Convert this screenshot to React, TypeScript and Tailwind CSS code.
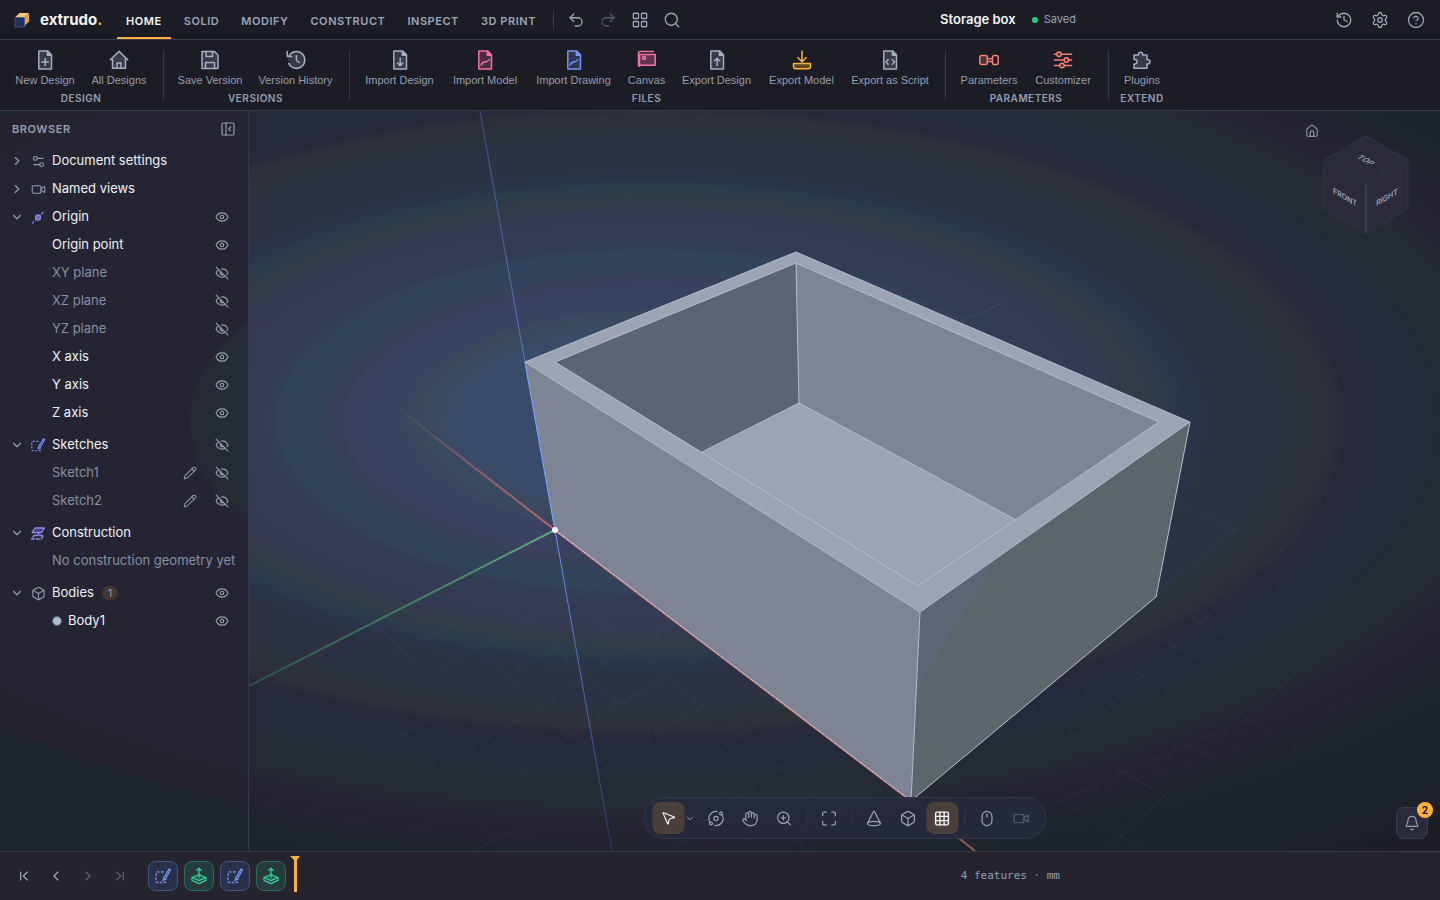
import React from "react";
import {
  Bell,
  Box,
  ChevronDown,
  ChevronFirst,
  ChevronLast,
  ChevronLeft,
  ChevronRight,
  CircleQuestionMark,
  Cone,
  Eye,
  EyeOff,
  Grid3x3,
  Hand,
  History,
  House,
  LayoutGrid,
  Maximize,
  Mouse,
  MousePointer2,
  Orbit,
  PanelLeftClose,
  Pencil,
  Redo2,
  Search,
  Settings,
  Settings2,
  Undo2,
  Video,
  ZoomIn,
} from "lucide-react";

type IconProps = { className?: string };

// Duotone 20px icons: stroke in the current colour, fill in a faded version of it
const Duotone: React.FC<{ className?: string; children: React.ReactNode }> = ({ className = "", children }) => (
  <svg
    viewBox="0 0 20 20"
    className={`size-5 ${className}`}
    fill="none"
    stroke="currentColor"
    strokeWidth="1.5"
    strokeLinejoin="round"
    aria-hidden="true"
  >
    {children}
  </svg>
);

const FilePage: React.FC<IconProps & { children: React.ReactNode }> = ({ className, children }) => (
  <Duotone className={className}>
    <path d="M3.8 1h9l3.7 3.8V19H3.8z" fill="currentColor" fillOpacity="0.22" />
    <path d="M12.4 1v4.2h4.1" fill="currentColor" />
    {children}
  </Duotone>
);

const NewDesignIcon = () => (
  <FilePage className="text-[#a3afc2]">
    <path d="M10.2 8v8M6.3 12h7.8" />
  </FilePage>
);
const AllDesignsIcon = () => (
  <Duotone className="text-[#a3afc2]">
    <path d="M3.5 9v9.2h13V9L10 2.2z" fill="currentColor" fillOpacity="0.22" stroke="none" />
    <path d="M.8 10.2 10 1.4l9.2 8.8M3.5 8.5v9.8h13V8.5M8 18v-5h4v5" />
  </Duotone>
);
const SaveIcon = () => (
  <Duotone className="text-[#a3afc2]">
    <path d="M2 1.5h12.5L18 5v13.5H2z" fill="currentColor" fillOpacity="0.22" />
    <path d="M6 1.5v5h6.5v-5M5.5 18.5v-6h9v6" />
  </Duotone>
);
const VersionHistoryIcon = () => (
  <Duotone className="text-[#a3afc2]">
    <circle cx="10.5" cy="10" r="8.4" fill="currentColor" fillOpacity="0.2" stroke="none" />
    <path d="M2.6 13A8.4 8.4 0 1 0 3 6M1.3 1v5.6h5M10.4 5v5.5l3.4 2.3" />
  </Duotone>
);
const ImportDesignIcon = () => (
  <FilePage className="text-[#a3afc2]">
    <path d="M10.2 7.5v8M7.2 12.6l3 3 3-3" />
  </FilePage>
);
const ImportModelIcon = () => (
  <FilePage className="text-[#f472a4]">
    <path d="M6 15.5c1-4 2.5-3 4.2-3.5S13 11 14.5 9.500" />
  </FilePage>
);
const ImportDrawingIcon = () => (
  <FilePage className="text-[#7396f5]">
    <path d="M6 15.5c1-4 2.5-3 4.2-3.5S13 11 14.5 9.500" />
  </FilePage>
);
const CanvasIcon = () => (
  <Duotone className="text-[#f472a4]">
    <path d="M2.5 4.5h15.7v10.700H2.5z" fill="currentColor" fillOpacity="0.3" />
    <path d="M1.5 16.5V3.5c0-1.5.7-2 2-2H17M2.5 15v2" />
    <circle cx="7" cy="8" r="1.5" />
  </Duotone>
);
const ExportDesignIcon = () => (
  <FilePage className="text-[#a3afc2]">
    <path d="M10.2 16V8.5M7.2 11.3l3-3 3 3" />
  </FilePage>
);
const ExportModelIcon = () => (
  <Duotone className="text-[#fbb432]">
    <path d="M1.5 13.5h17v3q0 2.3-2.3 2.3H3.8q-2.3 0-2.3-2.3z" fill="currentColor" fillOpacity="0.3" />
    <path d="M10 .5v11M5.5 7.3l4.5 4.5 4.5-4.5" />
  </Duotone>
);
const ExportScriptIcon = () => (
  <FilePage className="text-[#a3afc2]">
    <path d="M8.5 9.3 6 12l2.5 2.7M12 9.3l2.5 2.7-2.5 2.7" />
  </FilePage>
);
const ParametersIcon = () => (
  <Duotone className="text-[#f4806f]">
    <rect x=".8" y="5.5" width="7.5" height="9" rx="1.5" fill="currentColor" fillOpacity="0.22" />
    <rect x="13.5" y="5.5" width="5.7" height="9" rx="1.8" />
    <path d="M8.3 8.8h5.2M8.3 11.4h5.2" />
  </Duotone>
);
const CustomizerIcon = () => (
  <Duotone className="text-[#f4806f]">
    <path d="M.8 4.3h2.8M8.4 4.3h10.8M.8 10h10M16 10h3.2M.8 15.5h5.8M11.5 15.5h7.7" />
    <circle cx="6" cy="4.3" r="2.3" fill="currentColor" fillOpacity="0.22" />
    <circle cx="13.4" cy="10" r="2.3" fill="currentColor" fillOpacity="0.22" />
    <circle cx="9" cy="15.5" r="2.3" fill="currentColor" fillOpacity="0.22" />
  </Duotone>
);
const PluginsIcon = () => (
  <Duotone className="text-[#a3afc2]">
    <path
      d="M2 5h4.5V4.3a2.1 2.1 0 0 1 4.2 0V5H15v4.5h.7a2.3 2.3 0 0 1 0 4.6H15v4.2H2v-4.2h.8a2.3 2.3 0 0 0 0-4.6H2z"
      fill="currentColor"
      fillOpacity="0.2"
    />
  </Duotone>
);

const SketchIcon: React.FC<IconProps> = ({ className = "" }) => (
  <svg viewBox="0 0 18 18" className={className} fill="none" stroke="currentColor" strokeWidth="1.3" aria-hidden="true">
    <path d="M9.5 5h-6Q2 5 2 6.500v7.5q0 1.500 1.500 1.500h7q1.500 0 1.500-1.500v-2" strokeDasharray="2.500 1.500" />
    <path d="m15 2 1.500 1-5.200 9-2 1.500.2-2.500z" fill="currentColor" fillOpacity="0.3" strokeLinejoin="round" />
  </svg>
);

const ExtrudeIcon: React.FC<IconProps> = ({ className = "" }) => (
  <svg
    viewBox="0 0 18 18"
    className={className}
    fill="none"
    stroke="currentColor"
    strokeWidth="1.3"
    strokeLinejoin="round"
    aria-hidden="true"
  >
    <path d="M2 10.5 9 7.500l7 3-7 3.200z" fill="currentColor" fillOpacity="0.25" />
    <path d="M2 10.5v2.800l7 3.300 7-3.300v-2.800M9 10.500V1.500M6.500 3.800 9 1.300l2.500 2.500" />
  </svg>
);

const OriginIcon = () => (
  <svg viewBox="0 0 16 16" className="size-4" fill="none" stroke="#8b83f0" strokeWidth="1.3" aria-hidden="true">
    <path d="M2 14.500 14 2.500" strokeDasharray="3 1.400" />
    <circle cx="8" cy="8.500" r="2.500" fill="#5f6cc8" />
  </svg>
);

const ConstructionIcon = () => (
  <svg viewBox="0 0 16 16" className="size-4" fill="none" stroke="#8f85f5" strokeWidth="1.3" strokeLinejoin="round" aria-hidden="true">
    <path d="M5 3h9.500l-3 4.500H2z" fill="#8f85f5" fillOpacity="0.3" />
    <path d="M8.500 7.500v3M4 10.500h9.500L11 14H1.500z" strokeDasharray="4 1" />
  </svg>
);

type RibbonItem = { label: string; icon: React.FC; width: string };

const ribbonGroups: { name: string; items: RibbonItem[] }[] = [
  {
    name: "Design",
    items: [
      { label: "New Design", icon: NewDesignIcon, width: "w-[74px]" },
      { label: "All Designs", icon: AllDesignsIcon, width: "w-[70px]" },
    ],
  },
  {
    name: "Versions",
    items: [
      { label: "Save Version", icon: SaveIcon, width: "w-[78px]" },
      { label: "Version History", icon: VersionHistoryIcon, width: "w-[89px]" },
    ],
  },
  {
    name: "Files",
    items: [
      { label: "Import Design", icon: ImportDesignIcon, width: "w-[85px]" },
      { label: "Import Model", icon: ImportModelIcon, width: "w-[82px]" },
      { label: "Import Drawing", icon: ImportDrawingIcon, width: "w-[91px]" },
      { label: "Canvas", icon: CanvasIcon, width: "w-[51px]" },
      { label: "Export Design", icon: ExportDesignIcon, width: "w-[85px]" },
      { label: "Export Model", icon: ExportModelIcon, width: "w-[81px]" },
      { label: "Export as Script", icon: ExportScriptIcon, width: "w-[92px]" },
    ],
  },
  {
    name: "Parameters",
    items: [
      { label: "Parameters", icon: ParametersIcon, width: "w-[72px]" },
      { label: "Customizer", icon: CustomizerIcon, width: "w-[72px]" },
    ],
  },
  { name: "Extend", items: [{ label: "Plugins", icon: PluginsIcon, width: "w-[52px]" }] },
];

const tabs = ["Home", "Solid", "Modify", "Construct", "Inspect", "3D Print"];

const Logo = () => (
  <svg viewBox="0 0 16 16" className="size-4" aria-hidden="true">
    <path d="M1 5.500 5.500 1H15l-4.500 4.500z" fill="#fcc873" />
    <path d="M10.500 5.500 15 1v8.500L10.500 14z" fill="#e9a23c" />
    <path d="M1 5.500h9.500V15H1z" fill="#1f3158" stroke="#4a6cb0" strokeDasharray="1.500 1" />
  </svg>
);

const IconButton: React.FC<{ label: string; className?: string; disabled?: boolean; children: React.ReactNode }> = ({
  label,
  className = "size-8",
  disabled,
  children,
}) => (
  <button
    type="button"
    aria-label={label}
    disabled={disabled}
    className={`flex shrink-0 items-center justify-center rounded-lg disabled:opacity-45 ${className}`}
  >
    {children}
  </button>
);

const TopBar = () => (
  <header className="flex h-10 shrink-0 items-center border-b border-[#353b4c] bg-[#1c1c24] text-[#9aa5b8]">
    <a href="#" className="flex items-center pl-[14px]">
      <Logo />
      <span className="ml-[10px] w-[60px] pt-px text-[15px] font-bold text-[#f1f4f9]">
        extrudo<span className="text-[#ffb02e]">.</span>
      </span>
    </a>
    <nav className="ml-[17px] flex h-full items-stretch gap-1">
      {tabs.map((tab, i) => (
        <button
          key={tab}
          type="button"
          className={`border-b-2 px-[9px] pt-[6px] text-[11px] font-semibold tracking-wider whitespace-nowrap uppercase ${
            i === 0 ? "border-[#ffb13c] text-[#f1f4f9]" : "border-transparent"
          }`}
        >
          {tab}
        </button>
      ))}
    </nav>
    <div className="ml-2 flex items-center border-l border-[#353b4c] pl-[6px]">
      <IconButton label="Undo" className="h-5 w-8">
        <Undo2 size={18} strokeWidth={1.75} />
      </IconButton>
      <IconButton label="Redo" className="h-5 w-8" disabled>
        <Redo2 size={18} strokeWidth={1.75} />
      </IconButton>
      <IconButton label="All commands" className="h-5 w-8">
        <LayoutGrid size={18} strokeWidth={1.75} />
      </IconButton>
      <IconButton label="Search" className="h-5 w-8">
        <Search size={18} strokeWidth={1.75} />
      </IconButton>
    </div>
    <div className="flex flex-1 items-center justify-center">
      <h1 className="text-[13px] font-semibold text-[#f1f4f9]">Storage box</h1>
      <span className="ml-4 size-[6px] rounded-full bg-[#2fc48d]" />
      <span className="ml-[6px] text-[11px]">Saved</span>
    </div>
    <div className="flex items-center gap-1 pr-2">
      <IconButton label="History">
        <History size={18} strokeWidth={1.75} />
      </IconButton>
      <IconButton label="Settings">
        <Settings size={18} strokeWidth={1.75} />
      </IconButton>
      <IconButton label="Help">
        <CircleQuestionMark size={18} strokeWidth={1.75} />
      </IconButton>
    </div>
  </header>
);

const Ribbon = () => (
  <div className="flex h-[71px] shrink-0 border-b border-[#333c4b] bg-[#1c1c24] pt-[10px] pl-px text-[#939eb1]">
    {ribbonGroups.map((group) => (
      <section key={group.name} className="flex h-[50px] flex-col items-center border-r border-[#333a4a] pr-[9px] pl-[7px] last:border-0">
        <div className="flex gap-[2px]">
          {group.items.map((item) => (
            <button key={item.label} type="button" className={`flex flex-col items-center ${item.width}`}>
              <item.icon />
              <span className="mt-[2px] font-['Liberation_Sans',sans-serif] text-[11px] leading-4 whitespace-nowrap">{item.label}</span>
            </button>
          ))}
        </div>
        <h2 className="mt-[3px] text-[10px] leading-[14px] font-semibold tracking-wider uppercase">{group.name}</h2>
      </section>
    ))}
  </div>
);

type TreeNode = {
  label: string;
  icon?: React.ReactNode;
  open?: boolean;
  root?: boolean;
  visible?: boolean;
  muted?: boolean;
  editable?: boolean;
  count?: number;
  dot?: boolean;
};

const tree: TreeNode[][] = [
  [
    { label: "Document settings", root: true, icon: <Settings2 size={15} strokeWidth={1.75} /> },
    { label: "Named views", root: true, icon: <Video size={15} strokeWidth={1.75} /> },
    { label: "Origin", root: true, open: true, visible: true, icon: <OriginIcon /> },
    { label: "Origin point", visible: true },
    { label: "XY plane", visible: false, muted: true },
    { label: "XZ plane", visible: false, muted: true },
    { label: "YZ plane", visible: false, muted: true },
    { label: "X axis", visible: true },
    { label: "Y axis", visible: true },
    { label: "Z axis", visible: true },
  ],
  [
    { label: "Sketches", root: true, open: true, visible: false, icon: <SketchIcon className="size-4 text-[#6f92f0]" /> },
    { label: "Sketch1", visible: false, muted: true, editable: true },
    { label: "Sketch2", visible: false, muted: true, editable: true },
  ],
  [
    { label: "Construction", root: true, open: true, icon: <ConstructionIcon /> },
    { label: "No construction geometry yet", muted: true },
  ],
  [
    { label: "Bodies", root: true, open: true, visible: true, count: 1, icon: <Box size={15} strokeWidth={1.75} /> },
    { label: "Body1", visible: true, dot: true },
  ],
];

const TreeRow: React.FC<{ node: TreeNode }> = ({ node }) => (
  <li className="flex h-7 items-center pr-[19px] pl-[10px] text-[#929daf]">
    <span className="flex w-[42px] shrink-0 items-center">
      {node.root && (
        <button type="button" aria-label={`Toggle ${node.label}`} aria-expanded={!!node.open} className="flex w-[14px] justify-center">
          {node.open ? <ChevronDown size={14} strokeWidth={2} /> : <ChevronRight size={14} strokeWidth={2} />}
        </button>
      )}
      {node.icon && <span className="ml-[6px] flex w-4 justify-center">{node.icon}</span>}
    </span>
    {node.dot && <span className="mr-[6px] size-[10px] shrink-0 rounded-full border border-[#566072] bg-[#b0bccd]" />}
    <span className={`text-[13px] whitespace-nowrap ${node.muted ? "text-[#8590a2]" : "text-[#eef1f6]"}`}>{node.label}</span>
    {node.count !== undefined && (
      <span className="ml-2 rounded-full bg-[#45392f] px-[6px] text-[11px] leading-[14px]">{node.count}</span>
    )}
    <span className="ml-auto flex items-center gap-[18px]">
      {node.editable && (
        <button type="button" aria-label={`Edit ${node.label}`}>
          <Pencil size={14} strokeWidth={1.75} />
        </button>
      )}
      {node.visible !== undefined && (
        <button type="button" aria-label={`${node.visible ? "Hide" : "Show"} ${node.label}`}>
          {node.visible ? <Eye size={14} strokeWidth={2} /> : <EyeOff size={14} strokeWidth={2} />}
        </button>
      )}
    </span>
  </li>
);

const BrowserPanel = () => (
  <aside className="w-[249px] shrink-0 border-r border-[#303a49] bg-[radial-gradient(ellipse_1326px_600px_at_650px_311px,#252b33_34.6%,#252433_34.8%,#252433_65.6%,#24242c_65.8%,#26232d_68%,#26222d_70.2%,#1d242b_70.5%)]">
    <div className="flex h-9 items-center justify-between pr-3 pl-3 text-[#929daf]">
      <h2 className="text-[11px] font-semibold tracking-wider uppercase">Browser</h2>
      <button type="button" aria-label="Collapse browser">
        <PanelLeftClose size={16} strokeWidth={1.75} />
      </button>
    </div>
    <div className="flex flex-col gap-1">
      {tree.map((branch) => (
        <ul key={branch[0].label}>
          {branch.map((node) => (
            <TreeRow key={node.label} node={node} />
          ))}
        </ul>
      ))}
    </div>
  </aside>
);

// [offset, colour] bands of the backdrop glow, from the centre outwards
const glow: [number, string][] = [
  [0, "#41466a"],
  [4, "#3b4a6b"],
  [15, "#3a4b6a"],
  [16, "#3a4a60"],
  [18, "#3a485e"],
  [19, "#3b4161"],
  [22, "#3b4161"],
  [24, "#3a405a"],
  [25, "#33435b"],
  [28, "#31445b"],
  [29.5, "#343b54"],
  [34.5, "#343a54"],
  [36, "#343a48"],
  [37.5, "#323b48"],
  [39, "#2b3b4a"],
  [40.5, "#2a3449"],
  [42.5, "#2c3242"],
  [47, "#2c3242"],
  [48.5, "#2c333a"],
  [51, "#2c3238"],
  [52.5, "#272939"],
  [54, "#242a3a"],
  [58, "#242a3a"],
  [60, "#242b33"],
  [64.5, "#242b32"],
  [67, "#252432"],
  [70, "#242331"],
  [73, "#1d242b"],
  [85, "#1d232b"],
  [91, "#1c1c24"],
];

const floorGrid = [
  "M435 487 480 525M368 548 390 567M471 575 528 623M379 627 414 662M479 648 521 688M381 710 440 770M486 733 540 787",
  "M555 647 618 702M567 593 704 707M570 735 643 800M655 735 724 795M739 735 815 797",
  "M402 572 494 530M477 607 582 553M391 653 456 623M442 667 525 623M532 618 613 577M496 682 559 647M563 690 674 623",
  "M385 745 433 718M445 763 555 700M508 782 571 735 640 690M557 800 655 735 705 705M640 820 739 735 782 704M740 797 825 735",
  "M620 705 710 650M474 851 510 832M485 830 504 851M667 852 683 840 695 851M779 851 795 840 810 851",
  "M1177 503 1238 531M1184 474 1204 484M1280 550 1341 581M1257 576 1292 593M1230 597 1276 619M1188 616 1230 638",
  "M1150 633 1207 664M1108 654 1177 697M1066 678 1131 718M1028 706 1085 739M993 737 1047 768",
  "M1156 596 1234 529M1043 766 1112 704 1173 647 1303 531M1068 797 1246 720 1330 640",
  "M1246 718 1300 750M1180 740 1240 775M1120 770 1180 805M1060 800 1140 848M1110 848 1170 790",
];

const edge = "#b4bed1";

const Scene = () => (
  <svg viewBox="249 111 1191 740" preserveAspectRatio="xMidYMid slice" className="size-full" role="img" aria-label="Storage box model">
    <defs>
      <radialGradient id="glow" gradientUnits="userSpaceOnUse" cx="0" cy="0" r="600" gradientTransform="translate(650 421) scale(2.21 1)">
        {glow.map(([offset, color]) => (
          <stop key={offset} offset={`${offset}%`} stopColor={color} />
        ))}
      </radialGradient>
      <linearGradient id="axis-x" gradientUnits="userSpaceOnUse" x1="395" y1="406" x2="555" y2="530">
        <stop offset="0" stopColor="#e07a7a" stopOpacity="0" />
        <stop offset="1" stopColor="#b8646c" />
      </linearGradient>
      <linearGradient id="axis-y" gradientUnits="userSpaceOnUse" x1="249" y1="686" x2="555" y2="530">
        <stop offset="0" stopColor="#2c4f48" />
        <stop offset="1" stopColor="#5fa67c" />
      </linearGradient>
      <linearGradient id="axis-z" gradientUnits="userSpaceOnUse" x1="480" y1="111" x2="612" y2="851">
        <stop offset="0" stopColor="#3c5389" />
        <stop offset="0.57" stopColor="#6d97f7" />
        <stop offset="1" stopColor="#2b3a66" />
      </linearGradient>
      <linearGradient id="side" gradientUnits="userSpaceOnUse" x1="920" y1="612" x2="981" y2="649">
        <stop offset="0.48" stopColor="#5f6475" />
        <stop offset="0.52" stopColor="#5d656b" />
      </linearGradient>
    </defs>
    <rect x="249" y="111" width="1191" height="741" fill="url(#glow)" />
    <g fill="none" stroke="#5b6b6b" strokeOpacity="0.17">
      {floorGrid.map((d) => (
        <path key={d} d={d} />
      ))}
    </g>
    <path d="m960 322 42-19" stroke="#3f5a68" strokeOpacity="0.6" />
    <path d="M395 406 555 530" stroke="url(#axis-x)" strokeWidth="2" />
    <path d="M249 686 555 530" stroke="url(#axis-y)" strokeWidth="2" />
    <path d="m911 800 64 51" stroke="#9c5553" strokeWidth="2" />
    <path d="M480 111 555 530 612 851" stroke="url(#axis-z)" fill="none" />

    <g strokeLinejoin="round">
      <path d="M525 362 920 612 911 801 555 530z" fill="#7e8493" />
      <path d="M920 612 1190 422 1156 597 911 801z" fill="url(#side)" />
      <path d="M525 362 796 252 1190 422 920 612z" fill="#9da3b3" />
      <path d="M555 362 796 263 799 403 702 452z" fill="#5e6373" />
      <path d="M796 263 1159 422 1016 520 799 403z" fill="#7e8493" />
      <g fill="none" stroke={edge}>
        <path d="M525 362 796 252 1190 422 920 612z" />
        <path d="M555 362 796 263 1159 422 918 586z" />
        <path d="M796 263 799 403 702 452M799 403 1016 520" />
        <path d="M920 612 911 801 1156 597 1190 422" />
      </g>
      <path d="M525 362 555 530" stroke="#7ea2ff" />
      <path d="M555 530 911 801" stroke="#d8dbe6" />
      <path d="M555 531 910 801" stroke="#d9686b" />
    </g>
    <circle cx="555" cy="530" r="3" fill="#f4f6fa" />
  </svg>
);

const ViewCube = () => (
  <svg viewBox="0 0 88 100" className="h-[100px] w-[88px]" aria-label="View cube" role="img">
    <g fill="#2b2a39" stroke="#2c3843" strokeLinejoin="round">
      <path d="M44 1 86 25 44 50 2 25z" />
      <path d="M2 25 44 50V98L2 74z" />
      <path d="M86 25 44 50V98l42-24z" />
    </g>
    <path d="M44 50v48" stroke="#35414b" strokeWidth="2" />
    <g fill="#98a3b5" fontSize="8" fontWeight="600" textAnchor="middle">
      <text transform="matrix(.87 .5 -.87 .5 44 25)" y="3">
        TOP
      </text>
      <text transform="matrix(.87 .5 0 1 23 62)" y="3">
        FRONT
      </text>
      <text transform="matrix(.87 -.5 0 1 65 62)" y="3">
        RIGHT
      </text>
    </g>
  </svg>
);

const ToolbarDivider = () => <span className="mx-1 h-4 w-px bg-[#343b4b]" />;

const ViewToolbar = () => (
  <div
    role="toolbar"
    aria-label="View"
    className="flex h-[42px] items-center gap-[2px] rounded-full border border-[#313949] bg-[#252a3a]/95 px-2 text-[#96a1b3]"
  >
    <IconButton label="Select" className="size-8 bg-[#4b4039] text-[#f1f4f9]">
      <MousePointer2 size={16} strokeWidth={1.75} />
    </IconButton>
    <IconButton label="Selection options" className="-ml-[2px] mr-[2px] h-8 w-3">
      <ChevronDown size={11} strokeWidth={2} />
    </IconButton>
    <IconButton label="Orbit">
      <Orbit size={17} strokeWidth={1.75} />
    </IconButton>
    <IconButton label="Pan">
      <Hand size={17} strokeWidth={1.75} />
    </IconButton>
    <IconButton label="Zoom">
      <ZoomIn size={17} strokeWidth={1.75} />
    </IconButton>
    <ToolbarDivider />
    <IconButton label="Fit to view">
      <Maximize size={17} strokeWidth={1.75} />
    </IconButton>
    <ToolbarDivider />
    <IconButton label="Perspective">
      <Cone size={17} strokeWidth={1.75} />
    </IconButton>
    <IconButton label="Display style">
      <Box size={17} strokeWidth={1.75} />
    </IconButton>
    <IconButton label="Grid" className="size-8 bg-[#4b4039] text-[#f1f4f9]">
      <Grid3x3 size={17} strokeWidth={2} />
    </IconButton>
    <ToolbarDivider />
    <IconButton label="Mouse controls">
      <Mouse size={17} strokeWidth={1.75} />
    </IconButton>
    <IconButton label="Record" disabled>
      <Video size={17} strokeWidth={1.75} />
    </IconButton>
  </div>
);

const Viewport = () => (
  <main className="relative min-w-0 flex-1 overflow-hidden">
    <div className="absolute inset-0">
      <Scene />
    </div>
    <button type="button" aria-label="Home view" className="absolute top-[13px] right-[121px] text-[#929daf]">
      <House size={14} strokeWidth={1.75} />
    </button>
    <div className="absolute top-6 right-[30px]">
      <ViewCube />
    </div>
    <div className="absolute bottom-3 left-1/2 -translate-x-1/2">
      <ViewToolbar />
    </div>
    <button
      type="button"
      aria-label="2 notifications"
      className="absolute right-3 bottom-3 flex size-8 items-center justify-center rounded-lg border border-[#343d4d] bg-[#2b2a39] text-[#96a1b3]"
    >
      <Bell size={16} strokeWidth={1.75} />
      <span className="absolute -top-[6px] -right-[6px] flex size-4 items-center justify-center rounded-full bg-[#ffb13c] text-[10px] font-bold text-[#1c1c24]">
        2
      </span>
    </button>
  </main>
);

const features = ["sketch", "extrude", "sketch", "extrude"];

const Timeline = () => (
  <footer className="flex h-[49px] shrink-0 items-center border-t border-[#343c4b] bg-[#25242d] pl-2 text-[#a3aec0]">
    <IconButton label="Go to start">
      <ChevronFirst size={16} strokeWidth={1.75} />
    </IconButton>
    <IconButton label="Step back">
      <ChevronLeft size={16} strokeWidth={1.75} />
    </IconButton>
    <IconButton label="Step forward" disabled>
      <ChevronRight size={16} strokeWidth={1.75} />
    </IconButton>
    <IconButton label="Go to end" disabled>
      <ChevronLast size={16} strokeWidth={1.75} />
    </IconButton>
    <div className="ml-3 flex items-center gap-[6px]">
      {features.map((kind, i) =>
        kind === "sketch" ? (
          <IconButton key={i} label={`Sketch ${i + 1}`} className="size-[30px] border border-[#43578b] bg-[#29314a] text-[#7396f5]">
            <SketchIcon className="size-[18px]" />
          </IconButton>
        ) : (
          <IconButton key={i} label={`Extrude ${i + 1}`} className="size-[30px] border border-[#287058] bg-[#253b3c] text-[#36cf9d]">
            <ExtrudeIcon className="size-[18px]" />
          </IconButton>
        )
      )}
    </div>
    <svg viewBox="0 0 10 36" className="mb-1 ml-1 h-9 w-[10px]" fill="#ffb13c" aria-hidden="true">
      <path d="M0 0h10L7 4V36H4V4z" />
    </svg>
    <p className="mr-[380px] ml-auto font-['DejaVu_Sans_Mono',monospace] text-[11px] whitespace-nowrap text-[#939eb1]">4 features · mm</p>
  </footer>
);

export default function App() {
  return (
    <div className="flex h-screen flex-col overflow-hidden bg-[#1c1c24] font-['Inter',sans-serif]">
      <TopBar />
      <Ribbon />
      <div className="flex min-h-0 flex-1">
        <BrowserPanel />
        <Viewport />
      </div>
      <Timeline />
    </div>
  );
}
